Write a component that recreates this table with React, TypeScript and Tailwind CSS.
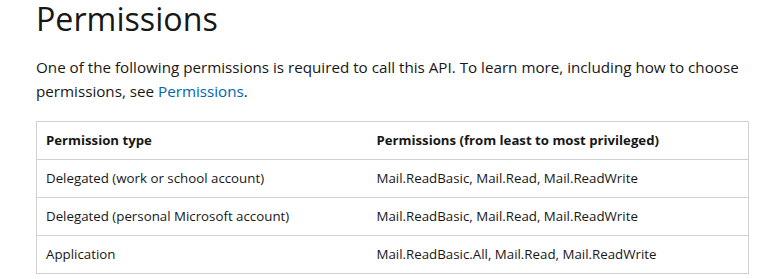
const rows = [
  ["Delegated (work or school account)", "Mail.ReadBasic, Mail.Read, Mail.ReadWrite"],
  ["Delegated (personal Microsoft account)", "Mail.ReadBasic, Mail.Read, Mail.ReadWrite"],
  ["Application", "Mail.ReadBasic.All, Mail.Read, Mail.ReadWrite"],
];

export default function App() {
  return (
    <div className="w-[764px] h-[279px] bg-white pl-[36px] pr-[15px] text-[#171717] overflow-hidden font-['Open_Sans',sans-serif]">
      <h1 className="text-[32.2px] leading-[38px] font-normal">Permissions</h1>
      <p className="mt-[17px] text-[15.2px] leading-[24px]">
        One of the following permissions is required to call this API. To learn more, including how to choose
        permissions, see <a className="text-[#0065b3]">Permissions</a>.
      </p>
      <table className="mt-[18px] w-[713px] border border-[#d1d1d1] text-[13.3px] text-left border-collapse">
        <thead>
          <tr className="h-[38px] text-[13.2px]">
            <th className="pl-[9px] font-bold w-[331px]">Permission type</th>
            <th className="pl-[9px] font-bold">Permissions (from least to most privileged)</th>
          </tr>
        </thead>
        <tbody>
          {rows.map((r, i) => (
            <tr key={i} className="h-[38px] border-t border-[#d1d1d1]">
              <td className="pl-[9px]">{r[0]}</td>
              <td className="pl-[9px]">{r[1]}</td>
            </tr>
          ))}
        </tbody>
      </table>
    </div>
  );
}
